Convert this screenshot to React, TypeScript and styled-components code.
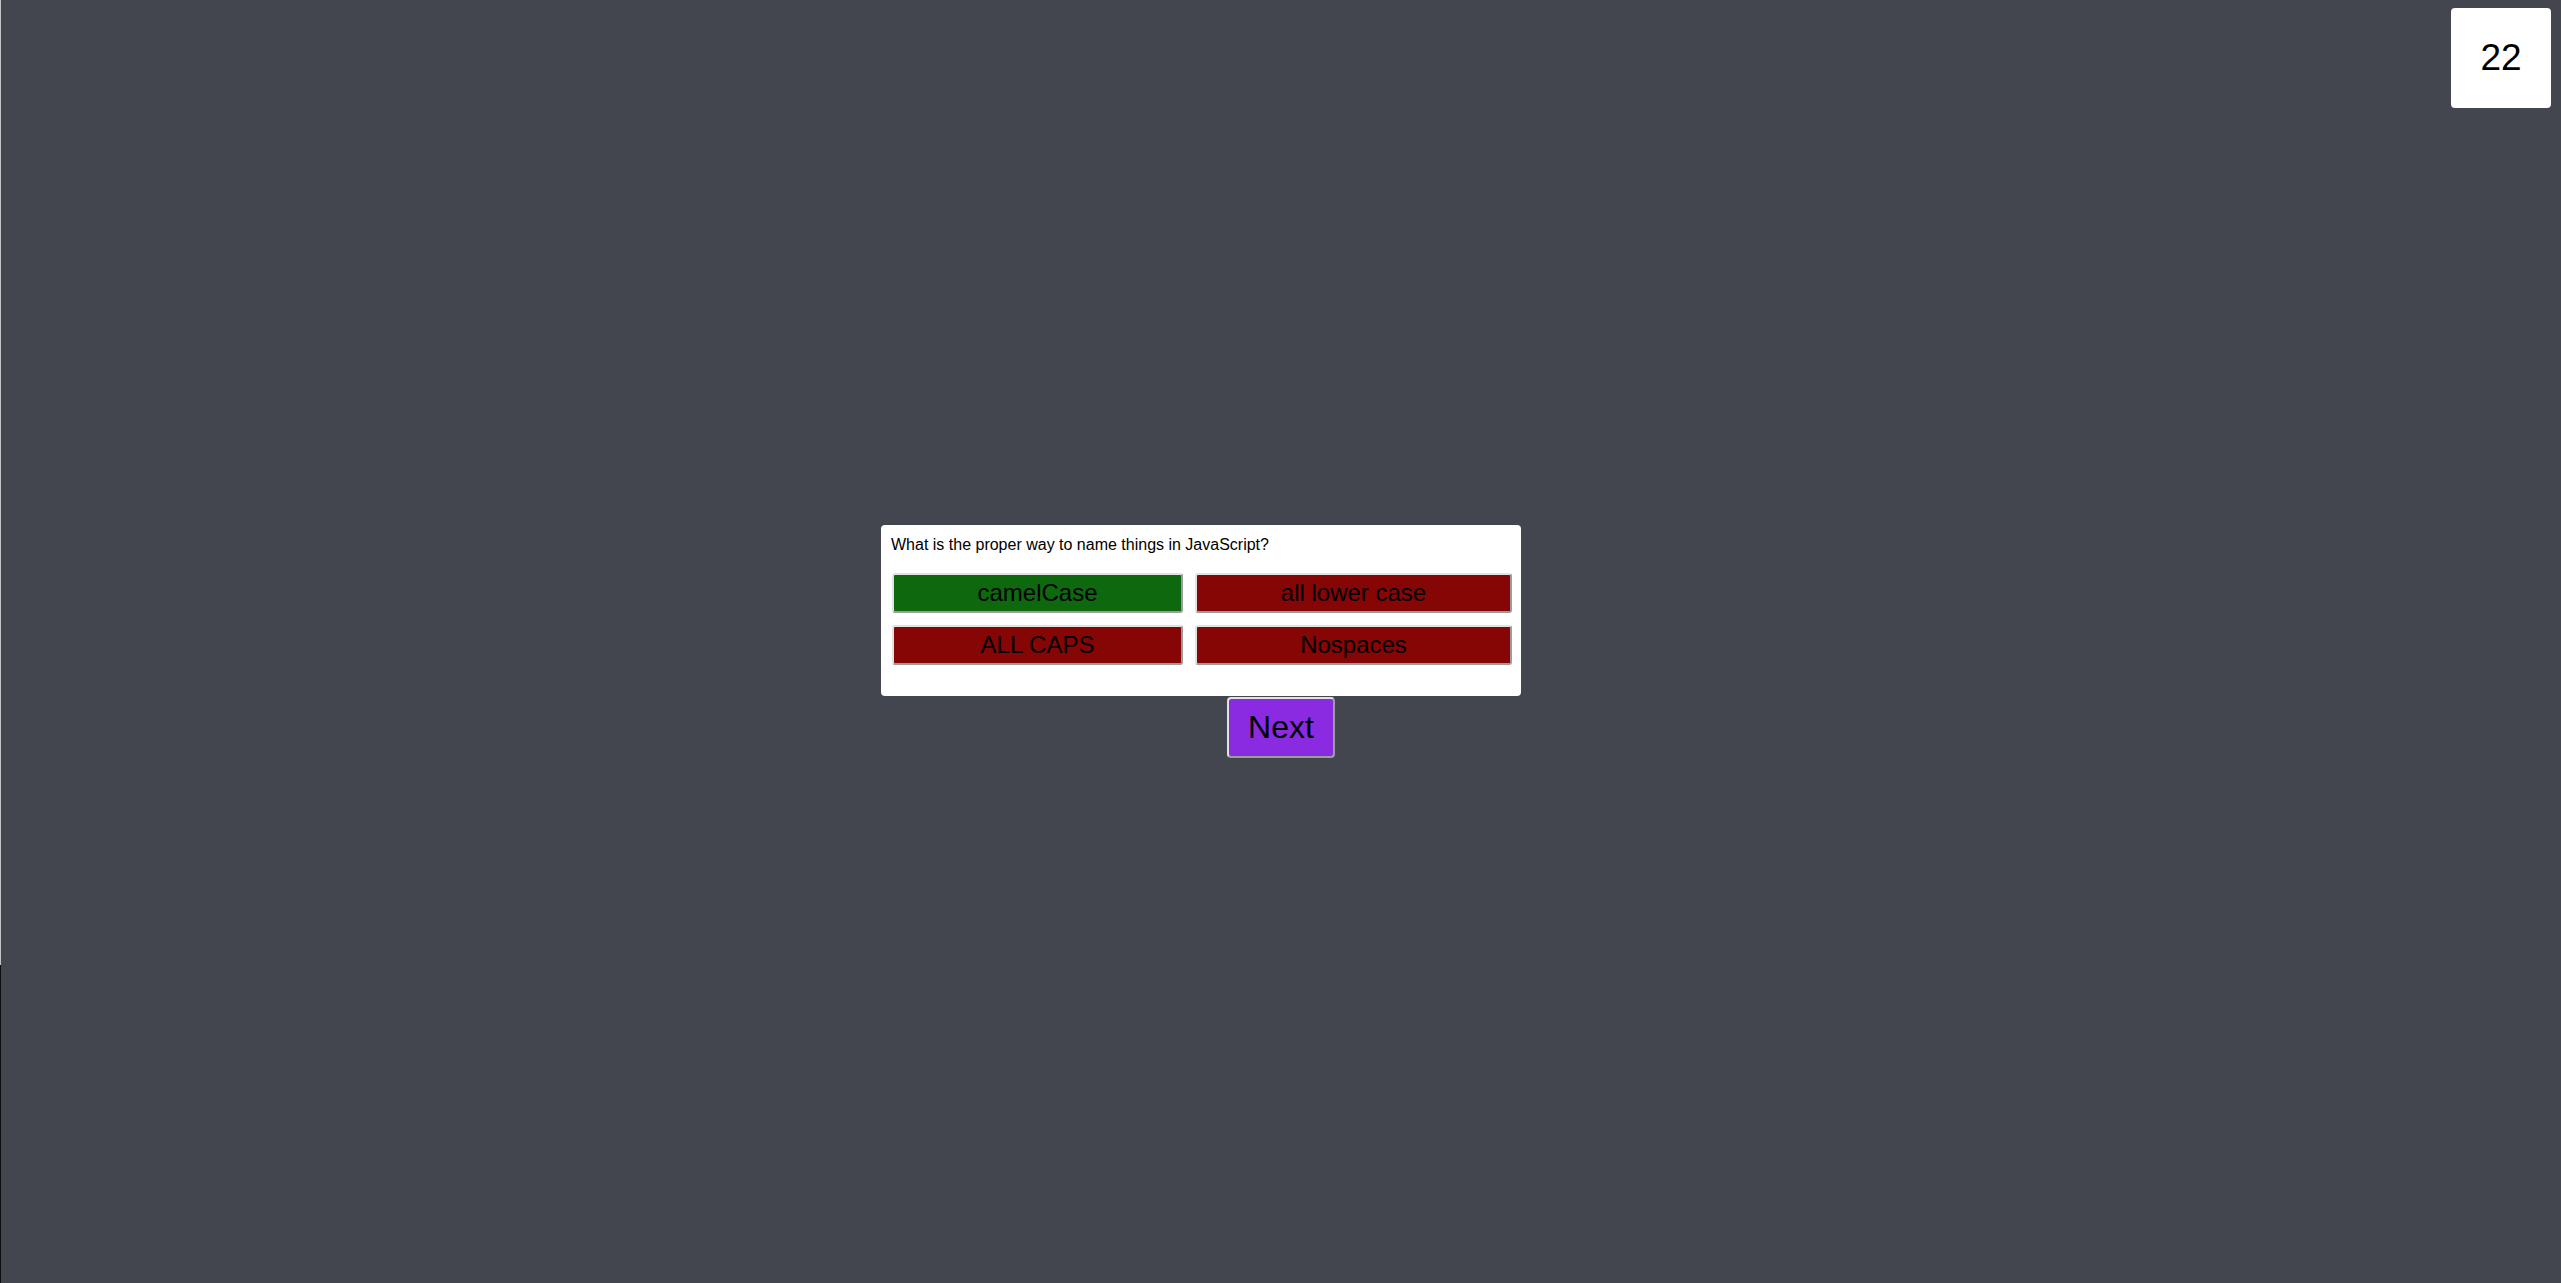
import React from "react";
import styled, { createGlobalStyle } from "styled-components";

const GlobalStyle = createGlobalStyle`
  html, body {
    margin: 0;
    padding: 0;
    background: #44464f;
    font-family: "Liberation Sans", Arial, sans-serif;
  }
`;

const Page = styled.div`
  box-sizing: border-box;
  position: relative;
  min-height: 1283px;
  display: flex;
  flex-direction: column;
  align-items: center;
  justify-content: center;
  border-left: 1px solid transparent;
  border-image: linear-gradient(to bottom, #c4c4c6 0, #c4c4c6 964px, #0d0d0f 964px, #0d0d0f 100%) 1;
`;

const Timer = styled.div`
  position: absolute;
  top: 8px;
  right: 10px;
  width: 100px;
  height: 100px;
  background: #ffffff;
  border-radius: 4px;
  display: flex;
  align-items: center;
  justify-content: center;
  font-size: 37px;
  color: #000;
`;

const Row = styled.div`
  display: flex;
  width: 800px;
`;

const Card = styled.div`
  box-sizing: border-box;
  width: 640px;
  height: 171px;
  background: #ffffff;
  border-radius: 4px;
  padding: 11px 10px 30px 10px;
`;

const Question = styled.div`
  font-size: 16px;
  line-height: 18px;
  color: #000;
`;

const Answers = styled.div`
  display: grid;
  grid-template-columns: 291px 317px;
  column-gap: 12px;
  row-gap: 12px;
  margin: 19px 0 0 1px;
`;

const Answer = styled.button<{ $correct?: boolean }>`
  box-sizing: border-box;
  height: 40px;
  margin: 0;
  padding: 0 0 1px 0;
  font-family: "Liberation Sans", Arial, sans-serif;
  font-size: 24px;
  color: #000;
  background: ${(p) => (p.$correct ? "#0e680e" : "#860505")};
  border: 2px solid;
  border-color: #e2e2e2 #9c9c9c #9c9c9c #e2e2e2;
  border-radius: 3px;
  display: flex;
  align-items: center;
  justify-content: center;
`;

const NextButton = styled.button`
  box-sizing: border-box;
  width: 108px;
  height: 61px;
  margin: 1px 0 0 0;
  padding: 0;
  font-family: "Liberation Sans", Arial, sans-serif;
  font-size: 32px;
  color: #000;
  background: #8a2be2;
  border: 2px solid;
  border-color: #e2e2e2 #9c9c9c #9c9c9c #e2e2e2;
  border-radius: 4px;
`;

const answers = [
  { text: "camelCase", correct: true },
  { text: "all lower case", correct: false },
  { text: "ALL CAPS", correct: false },
  { text: "Nospaces", correct: false },
];

export default function App() {
  return (
    <>
      <GlobalStyle />
      <Page>
        <Timer>22</Timer>
        <Row>
          <Card>
            <Question>What is the proper way to name things in JavaScript?</Question>
            <Answers>
              {answers.map((a) => (
                <Answer key={a.text} $correct={a.correct}>
                  {a.text}
                </Answer>
              ))}
            </Answers>
          </Card>
        </Row>
        <NextButton>Next</NextButton>
      </Page>
    </>
  );
}
